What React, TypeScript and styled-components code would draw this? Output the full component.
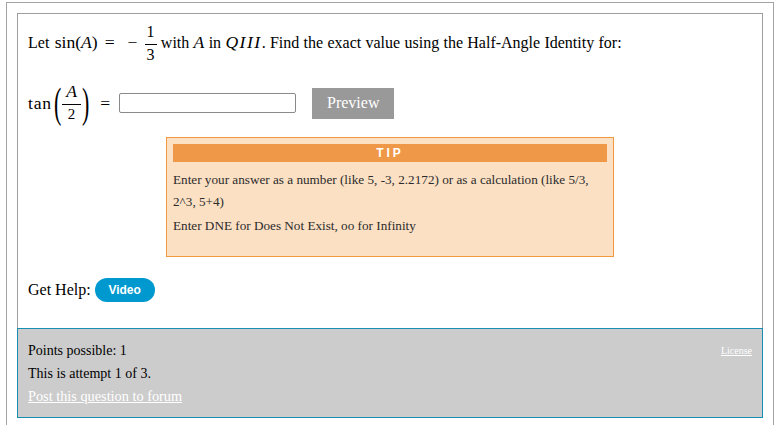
import React from "react";
import styled, { createGlobalStyle } from "styled-components";

const GlobalStyle = createGlobalStyle`
  html, body {
    margin: 0;
    padding: 0;
    background: #ffffff;
    font-family: "Liberation Serif", "Times New Roman", serif;
    color: #000;
  }
`;

const Frame = styled.div`
  margin: 2px 0 0 6px;
  width: 768px;
  height: 423px;
  box-sizing: border-box;
  border: 1px solid #a3a3a3;
  border-bottom: none;
  padding: 10px 10px 0 10px;
`;

const Question = styled.div`
  border: 1px solid #9e9e9e;
  border-bottom: none;
  padding: 8px 10px 26px 10px;
`;

const Statement = styled.div`
  height: 40px;
  line-height: 40px;
  font-size: 16px;
  white-space: nowrap;
  word-spacing: 0.3px;
`;

const MathRun = styled.span`
  font-family: "Liberation Serif", "Times New Roman", serif;
  font-size: 17.6px;
  margin-left: 1px;
`;

const Var = styled.span<{ $spread?: number }>`
  font-style: italic;
  font-size: 17.6px;
  letter-spacing: ${(p) => p.$spread ?? 0}px;
`;

const Op = styled.span<{ $left: number; $right: number }>`
  margin: 0 ${(p) => p.$right}px 0 ${(p) => p.$left}px;
`;

const Frac = styled.span<{ $size: number; $pad: number }>`
  display: inline-flex;
  flex-direction: column;
  align-items: center;
  vertical-align: middle;
  font-size: ${(p) => p.$size}px;
  line-height: ${(p) => p.$size}px;
  --pad: ${(p) => p.$pad}px;
`;

const Num = styled.span`
  display: block;
  padding: 0 var(--pad) 4px var(--pad);
`;

const Bar = styled.span`
  display: block;
  align-self: stretch;
  height: 1px;
  background: #000;
`;

const Den = styled.span`
  display: block;
  padding: 2px var(--pad) 0 var(--pad);
`;

const AnswerRow = styled.div`
  display: flex;
  align-items: center;
  height: 36px;
  margin-top: 23px;
  font-size: 17.6px;
`;

const Fn = styled.span`
  letter-spacing: 0.8px;
  margin-right: 1px;
`;

const BigParen = styled.span`
  display: inline-block;
  font-size: 22px;
  line-height: 22px;
  transform: scaleY(1.95);
  margin: 0 1px;
`;

const Equals = styled.span`
  margin: 0 9px 0 10px;
`;

const AnswerInput = styled.input`
  width: 177px;
  height: 20px;
  box-sizing: border-box;
  border: 1px solid #8a8a8a;
  border-radius: 2px;
  padding: 0 4px;
  margin: 0;
  background: #fff;
`;

const PreviewButton = styled.button`
  margin-left: 16px;
  width: 82px;
  height: 31px;
  border: none;
  background: #999999;
  color: #fff;
  font-family: "Liberation Serif", "Times New Roman", serif;
  font-size: 16px;
  padding: 0;
  cursor: pointer;
`;

const Tip = styled.div`
  margin: 16px 0 0 138px;
  width: 448px;
  height: 120px;
  box-sizing: border-box;
  border: 1px solid #f0993f;
  background: #fbe0c4;
  padding: 6px;
`;

const TipHeader = styled.div`
  height: 18px;
  line-height: 18px;
  background: #ef9847;
  color: #fff;
  text-align: center;
  font-family: "Liberation Sans", Arial, sans-serif;
  font-weight: bold;
  font-size: 12px;
  letter-spacing: 3px;
`;

const TipText = styled.p<{ $first?: boolean }>`
  margin: ${(p) => (p.$first ? "7px 0 0 0" : "2px 0 0 0")};
  font-size: 13.2px;
  line-height: 22px;
  color: #2b2b2b;
`;

const HelpRow = styled.div`
  display: flex;
  align-items: center;
  margin-top: 21px;
  height: 24px;
  font-size: 16px;
`;

const VideoPill = styled.button`
  margin-left: 4px;
  width: 60px;
  height: 24px;
  border: none;
  border-radius: 12px;
  background: #0099cf;
  color: #fff;
  font-family: "Liberation Sans", Arial, sans-serif;
  font-weight: bold;
  font-size: 12px;
  padding: 0;
  cursor: pointer;
`;

const Footer = styled.div`
  display: flex;
  justify-content: space-between;
  align-items: flex-start;
  border: 1px solid #1a8db3;
  background: #cccccc;
  padding: 10px 10px 9px 10px;
`;

const FooterLines = styled.div`
  font-size: 14px;
  line-height: 23px;
`;

const Line = styled.div``;

const WhiteLink = styled.a<{ $size: number }>`
  color: #fff;
  text-decoration: underline;
  font-size: ${(p) => p.$size}px;
  line-height: 23px;
`;

export default function App() {
  return (
    <>
      <GlobalStyle />
      <Frame>
        <Question>
          <Statement>
            Let{" "}
            <MathRun>
              sin(<Var>A</Var>)<Op $left={7} $right={13}>=</Op>
              <Op $left={0} $right={7}>−</Op>
              <Frac $size={16} $pad={2}>
                <Num>1</Num>
                <Bar />
                <Den>3</Den>
              </Frac>
            </MathRun>{" "}
            with <Var>A</Var> in <Var $spread={1.5}>QIII</Var>. Find the exact value using the
            Half-Angle Identity for:
          </Statement>
          <AnswerRow>
            <Fn>tan</Fn>
            <BigParen>(</BigParen>
            <Frac $size={15} $pad={4}>
              <Num>
                <Var>A</Var>
              </Num>
              <Bar />
              <Den>2</Den>
            </Frac>
            <BigParen>)</BigParen>
            <Equals>=</Equals>
            <AnswerInput type="text" aria-label="answer" />
            <PreviewButton type="button">Preview</PreviewButton>
          </AnswerRow>
          <Tip>
            <TipHeader>TIP</TipHeader>
            <TipText $first>
              Enter your answer as a number (like 5, -3, 2.2172) or as a calculation (like 5/3,
              2^3, 5+4)
            </TipText>
            <TipText>Enter DNE for Does Not Exist, oo for Infinity</TipText>
          </Tip>
          <HelpRow>
            Get Help:
            <VideoPill type="button">Video</VideoPill>
          </HelpRow>
        </Question>
        <Footer>
          <FooterLines>
            <Line>Points possible: 1</Line>
            <Line>This is attempt 1 of 3.</Line>
            <Line>
              <WhiteLink href="#" $size={14.3}>
                Post this question to forum
              </WhiteLink>
            </Line>
          </FooterLines>
          <WhiteLink href="#" $size={10}>
            License
          </WhiteLink>
        </Footer>
      </Frame>
    </>
  );
}
